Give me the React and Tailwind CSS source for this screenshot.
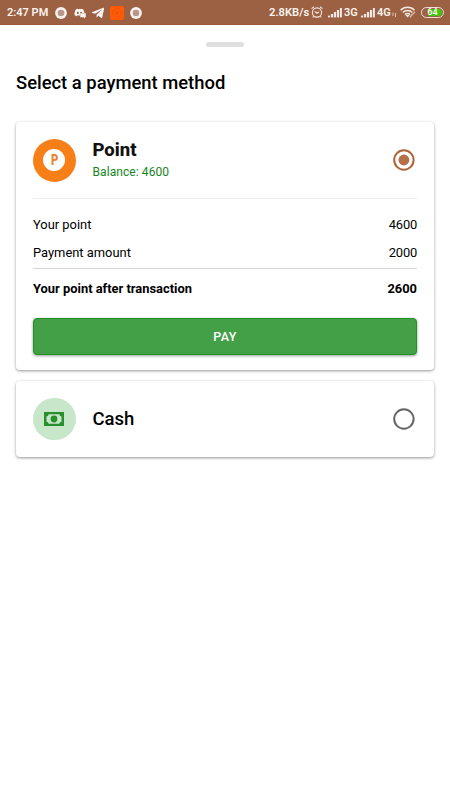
import { FaTelegramPlane, FaDiscord } from 'react-icons/fa';

const summary = [
    { label: 'Your point', value: '4600' },
    { label: 'Payment amount', value: '2000' },
];

function RingIcon({ className }) {
    return (<svg className={className} width="12" height="12" viewBox="0 0 12 12">
      <circle cx="6" cy="6" r="5.9" fill="#f8f2ee"/>
      <circle cx="6" cy="6" r="3.3" fill="#b8978a"/>
    </svg>);
}

function DiscordIcon({ className }) {
    return (<span className={`flex items-end ${className}`}>
      <FaDiscord className="mb-px shrink-0" size={11} color="#fbf5f2"/>
      <svg className="-ml-[5px] h-[6px] w-[6px] shrink-0" viewBox="0 0 6 6">
        <path d="M0 0h6v4.5H5V6L3.5 4.5H0z" fill="#fbf5f2" stroke="#9b6142" strokeWidth=".5"/>
      </svg>
    </span>);
}

function SignalIcon({ className }) {
    return (<svg className={className} width="14" height="11" viewBox="0 0 14 11" fill="#f3e9e4">
      <rect x="0" y="8.6" width="2" height="1.8"/>
      <rect x="2.9" y="7" width="2.2" height="3.4"/>
      <rect x="5.9" y="5" width="2.2" height="5.4"/>
      <rect x="8.9" y="3" width="2.2" height="7.4"/>
      <rect x="11.9" y="1" width="2" height="9.4"/>
    </svg>);
}

function AlarmIcon({ className }) {
    return (<svg className={className} width="12" height="12" viewBox="0 0 12 12" fill="none" stroke="#f3e9e4" strokeWidth="1.1">
      <circle cx="6" cy="6.5" r="4.6"/>
      <path d="M.6 2.6 3 .6M11.4 2.6 9 .6M3.7 5.5 6 7.2l2-1.5M2.7 10.3l-1 1.2M9.3 10.3l1 1.2"/>
    </svg>);
}

function WifiIcon({ className }) {
    return (<svg className={className} width="16" height="12" viewBox="0 0 16 12" fill="none" stroke="#f3e9e4" strokeWidth="1.5">
      <path d="M.6 4.3C4.4.3 10.8.3 14.5 4.3M2.8 6.6c2.6-2.8 7-2.8 9.5 0M5 8.7c1.4-1.5 3.8-1.5 5.1 0"/>
      <path d="M5.5 9h4L7.6 11.5z" fill="#f3e9e4" stroke="none"/>
      <path d="m9.8 11.2 5.2-5.4" stroke="#d9b9a8" strokeWidth="1.3"/>
    </svg>);
}

function StatusBar() {
    return (<header className="flex h-[25px] items-center justify-between border-b border-[#96593c] bg-[#9b6142] pt-px pr-[6px] pl-[7px] text-[11px] font-semibold text-[#faf3ef]">
      <div className="flex items-center">
        <span className="w-[48px] pt-[2px] whitespace-nowrap">2:47 PM</span>
        <RingIcon />
        <DiscordIcon className="ml-[7px] w-[14px]"/>
        <FaTelegramPlane className="ml-[3px]" size={14}/>
        <svg className="ml-[5px]" width="14" height="14" viewBox="0 0 14 14">
          <rect width="14" height="14" rx="2" fill="#ff5a05"/>
          <circle cx="7" cy="7" r="4.5" fill="none" stroke="#dc5210" strokeWidth=".8" strokeDasharray="2 1"/>
          <path d="M5 6.5h4M6 8.2h2" stroke="#dc5210" strokeWidth=".8"/>
        </svg>
        <RingIcon className="ml-[6px]"/>
      </div>
      <div className="flex items-center">
        <span className="w-[42px] pt-[2px] text-[11.2px] whitespace-nowrap">2.8KB/s</span>
        <AlarmIcon className="mr-[5px]"/>
        <SignalIcon className="mr-[2px]"/>
        <span className="w-[17px] pt-[2px] text-[11px]">3G</span>
        <SignalIcon className="mr-[2px]"/>
        <span className="w-[15px] pt-[2px] text-[11px]">4G</span>
        <svg className="mt-1 mr-[3px]" width="5" height="5" viewBox="0 0 5 5">
          <path d="M1 .5V4M3.5 1v4" stroke="#e0cdc3" strokeWidth=".9"/>
        </svg>
        <WifiIcon className="mr-[5px]"/>
        <span className="flex h-[11px] w-[23px] items-center justify-center rounded-full border border-[#efe0d8] bg-linear-to-r from-[#9b6142] from-30% to-[#43c40d] to-30% bg-clip-content p-px text-[9px] leading-none">64</span>
      </div>
    </header>);
}

function Radio({ checked }) {
    return (<svg className="mr-[2px]" width="23" height="23" viewBox="0 0 23 23">
      <circle cx="11.9" cy="11" r="9.7" fill="none" stroke={checked ? '#ae6336' : '#666666'} strokeWidth="2"/>
      {checked && <circle cx="11.9" cy="11" r="5.4" fill="#b56f49"/>}
    </svg>);
}

function PointIcon() {
    return (<div className="flex size-[42.5px] items-center justify-center rounded-full bg-[#f77f17]">
      <div className="flex size-[22px] items-center justify-center rounded-full bg-white text-[14px] leading-none font-black text-[#e88430]">
        <span className="scale-x-80">P</span>
      </div>
    </div>);
}

export default function App() {
    return (<div className="h-[800px] w-[450px] overflow-hidden bg-white font-[Roboto,sans-serif] text-black">
      <StatusBar />
      <main className="px-4 pt-[17px]">
        <div className="mx-auto h-[5px] w-[38px] rounded-full bg-[#dfdfdf]"/>
        <h1 className="mt-[22px] text-[18.4px] leading-7 font-medium">Select a payment method</h1>

        <section className="mt-[25px] h-[248px] rounded-[4px] bg-white px-[17px] pt-[17px] shadow-[0_1px_3px_rgba(0,0,0,0.42)]">
          <div className="flex h-[60px] items-start border-b border-[#eeeeee]">
            <PointIcon />
            <div className="ml-[17px] flex-1">
              <h2 className="text-[18.5px] leading-[22px] font-extrabold text-[#111111]">Point</h2>
              <p className="mt-[2px] text-[12px] leading-[18px] tracking-[0.08px] text-[#16851b]">Balance: 4600</p>
            </div>
            <div className="pt-[10px]">
              <Radio checked/>
            </div>
          </div>
          <dl className="flex h-[70px] flex-col gap-[8px] border-b border-[#d5d5d5] pt-[16px] text-[12.9px] leading-5">
            {summary.map((row) => (<div key={row.label} className="flex justify-between">
                <dt>{row.label}</dt>
                <dd className="tracking-[-0.2px]">{row.value}</dd>
              </div>))}
          </dl>
          <div className="mt-[10px] flex justify-between text-[12.9px] leading-5 font-bold">
            <span>Your point after transaction</span>
            <span>2600</span>
          </div>
          <button className="mt-[19px] flex h-[37px] w-full items-center justify-center rounded-[4px] border border-[#1d9326] bg-[#43a047] pt-px text-[12.5px] font-medium tracking-[0.4px] text-white shadow-[0_1px_3px_rgba(0,0,0,0.4)]">
            PAY
          </button>
        </section>

        <section className="mt-[11px] flex h-[76px] items-center rounded-[4px] bg-white px-[17px] shadow-[0_1px_3px_rgba(0,0,0,0.42)]">
          <div className="flex size-[42.5px] items-center justify-center rounded-full bg-[#c8e6c9]">
            <svg width="20" height="14" viewBox="0 0 20 14">
              <rect width="20" height="14" fill="#278f2d"/>
              <path d="M4.5 2.2h11c0 1.3.8 2.1 2 2.1v5.4c-1.2 0-2 .8-2 2.1h-11c0-1.3-.8-2.1-2-2.1V4.3c1.2 0 2-.8 2-2.1z" fill="#c8e6c9"/>
              <circle cx="10" cy="7" r="3.4" fill="#278f2d"/>
            </svg>
          </div>
          <h2 className="ml-[17px] flex-1 pb-px text-[18.5px] leading-6 font-medium">Cash</h2>
          <Radio />
        </section>
      </main>
    </div>);
}
